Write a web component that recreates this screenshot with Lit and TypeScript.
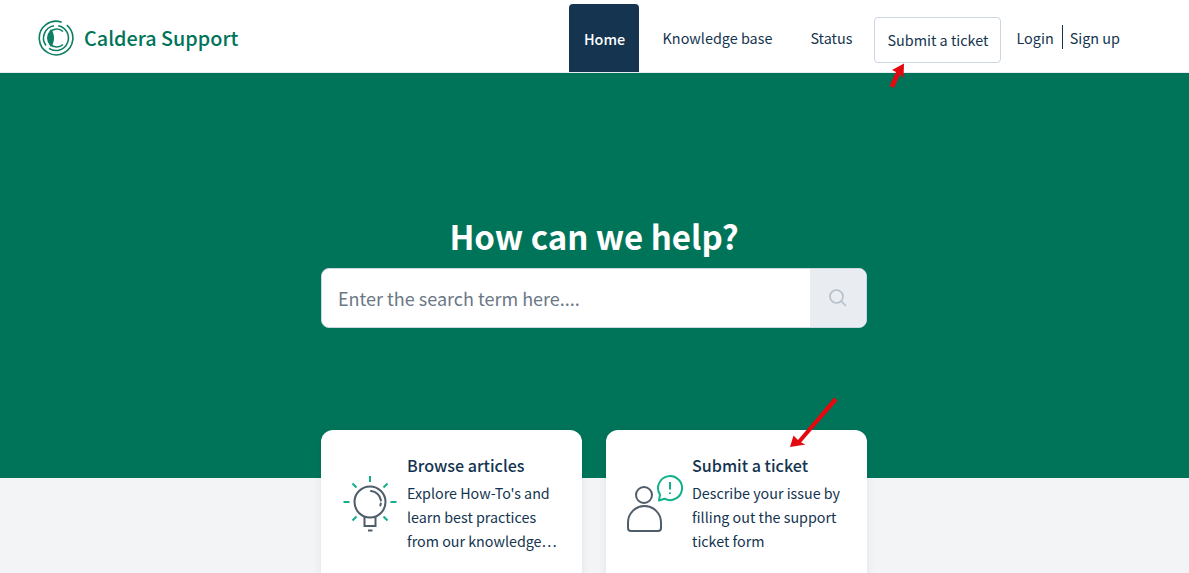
import { LitElement, css, html, svg } from 'lit'
import { customElement } from 'lit/decorators.js'

const logo = svg`<svg class="logo" width="36" height="36" viewBox="0 0 36 36" fill="none" stroke="#0f7f63" stroke-width="1.600">
  <path d="M23.700 2.200A16.800 16.800 0 1 0 28.800 5.100" />
  <path d="M20.200 5.700A12.500 12.500 0 1 1 11 28.400" />
  <path d="M16 5.700A12.500 12.500 0 0 0 8 25.500" />
  <path d="M25 11.500A9 9 0 1 0 25 24.500" />
  <path d="M13 9C9 14 9 22 13 27C17 22 17 14 13 9Z" fill="#0f7f63" stroke="none" />
</svg>`

const bulb = svg`<svg width="54" height="57" viewBox="0 0 54 57" fill="none" stroke-width="2">
  <g stroke="#12b08a">
    <path d="M27 1V7M9.500 8.500L13.500 12.500M44.500 8.500L40.500 12.500M0.500 27H6.500M47.500 27H53.500M9.500 45.500L13.500 41.500M44.500 45.500L40.500 41.500" />
  </g>
  <g stroke="#4f5d6b">
    <circle cx="27" cy="27" r="15.500" />
    <path d="M21.500 42V51H32.500V42" />
    <path d="M25 55.500H29.500" />
    <path d="M28 16A11 11 0 0 1 38 25.500M37.800 28.500L37.300 30.500" stroke-linecap="round" />
  </g>
</svg>`

const person = svg`<svg class="person" width="58" height="58" viewBox="0 0 58 58" fill="none" stroke-width="2">
  <g stroke="#4f5d6b">
    <circle cx="18" cy="20" r="8" />
    <path d="M2 53V47.500A16.500 16.500 0 0 1 35 47.500V53C35 55 34 56 32 56H5C3 56 2 55 2 53Z" />
  </g>
  <g stroke="#12b08a">
    <path d="M34 19.600A12 12 0 1 1 38.500 23.700L33 25.500Z" stroke-linejoin="round" />
    <path d="M44 7V14.500M44 17.500V19" />
  </g>
</svg>`

const arrow = (w: number, h: number, d: string, cls: string) =>
  svg`<svg class="arrow ${cls}" width="${w}" height="${h}" viewBox="0 0 ${w} ${h}"><path d="${d}" fill="#e3090f" /></svg>`

@customElement('app-root')
export class AppRoot extends LitElement {
  static styles = css`
    :host {
      display: block;
      height: 573px;
      overflow: hidden;
      position: relative;
      background: #f3f4f6;
      color: #14344f;
      font-family: 'Noto Sans CJK SC', 'Noto Sans', sans-serif;
      font-size: 14.4px;
    }

    header {
      box-sizing: border-box;
      height: 73px;
      background: #fff;
      display: flex;
      align-items: center;
      padding: 2px 69px 0 38px;
      border-bottom: 1px solid #e8ebef;
    }

    .brand {
      display: flex;
      align-items: center;
      gap: 10px;
      font-size: 19.8px;
      font-weight: 500;
      color: #007459;
      flex: 1;
    }

    .logo {
      margin-top: 2px;
    }

    nav {
      display: flex;
      align-items: center;
      height: 100%;
      line-height: 24px;
    }

    .home {
      box-sizing: border-box;
      align-self: flex-end;
      width: 70px;
      height: 68px;
      padding: 1px 0 0 2px;
      background: #14344f;
      color: #fff;
      border-radius: 4px 4px 0 0;
      display: flex;
      align-items: center;
      justify-content: center;
      font-weight: 500;
    }

    .link {
      margin: 2px 0 0 24px;
    }

    .status {
      margin: 2px 0 0 38px;
    }

    .submit {
      box-sizing: border-box;
      margin: 6px 0 0 22px;
      width: 127px;
      height: 46px;
      border: 1px solid #ccd6e0;
      border-radius: 4px;
      display: flex;
      align-items: center;
      justify-content: center;
    }

    .login {
      margin-left: 15px;
      padding-right: 8px;
      height: 24px;
      line-height: 26px;
      border-right: 1px solid #14344f;
    }

    .signup {
      margin: 2px 0 0 7px;
    }

    .hero {
      box-sizing: border-box;
      height: 405px;
      background: #007459;
      padding: 140px 1px 0 0;
      display: flex;
      flex-direction: column;
      align-items: center;
    }

    h1 {
      margin: 0 0 9px;
      color: #fff;
      font-size: 33px;
      line-height: 46px;
      font-weight: 700;
    }

    .search {
      box-sizing: border-box;
      width: 546px;
      height: 60px;
      background: #fff;
      border: 1px solid #ccd6e0;
      border-radius: 8px;
      overflow: hidden;
      display: flex;
    }

    .search .term {
      flex: 1;
      padding-left: 16px;
      display: flex;
      align-items: center;
      font-size: 18px;
      color: #6b7785;
    }

    .search .go {
      width: 56px;
      background: #e9ecf1;
      display: flex;
      align-items: center;
      justify-content: center;
    }

    .cards {
      display: flex;
      justify-content: center;
      gap: 24px;
      margin-top: -48px;
      padding-right: 1px;
    }

    .card {
      box-sizing: border-box;
      width: 261px;
      height: 180px;
      background: #fff;
      border-radius: 12px;
      box-shadow: 0 2px 8px rgba(20, 52, 79, 0.08);
      padding: 23px 24px 0 22px;
      display: flex;
      gap: 10px;
    }

    .card .icon {
      flex: none;
      width: 54px;
      padding-top: 22px;
    }

    .person {
      margin-left: -2px;
    }

    .card h2 {
      margin: 0 0 4px;
      font-size: 16.1px;
      line-height: 24px;
      font-weight: 500;
    }

    .card p {
      margin: 0;
      width: 152px;
      font-family: 'Noto Sans CJK KR', 'Noto Sans', sans-serif;
      font-size: 14.3px;
      line-height: 24px;
    }

    .arrow {
      position: absolute;
    }

    .arrow.top {
      left: 888px;
      top: 63px;
    }

    .arrow.low {
      left: 788px;
      top: 397px;
    }
  `

  render() {
    return html`
      <header>
        <div class="brand">${logo}<span>Caldera Support</span></div>
        <nav>
          <div class="home">Home</div>
          <div class="link">Knowledge base</div>
          <div class="status">Status</div>
          <div class="submit">Submit a ticket</div>
          <div class="login">Login</div>
          <div class="signup">Sign up</div>
        </nav>
      </header>
      <section class="hero">
        <h1>How can we help?</h1>
        <div class="search">
          <div class="term">Enter the search term here....</div>
          <div class="go">
            <svg width="18" height="18" viewBox="0 0 18 18" fill="none" stroke="#b4bfca" stroke-width="1.600">
              <circle cx="7.500" cy="7.500" r="6.500" />
              <path d="M12.500 12.500L17 17" />
            </svg>
          </div>
        </div>
      </section>
      <section class="cards">
        <div class="card">
          <div class="icon">${bulb}</div>
          <div>
            <h2>Browse articles</h2>
            <p>Explore How-To's and learn best practices from our knowledge…</p>
          </div>
        </div>
        <div class="card">
          <div class="icon">${person}</div>
          <div>
            <h2>Submit a ticket</h2>
            <p>Describe your issue by filling out the support ticket form</p>
          </div>
        </div>
      </section>
      ${arrow(18, 26, 'M16 0.500L15.500 15L12 11.500L6 25L1.500 23L8 9L4 7Z', 'top')}
      ${arrow(50, 53, 'M2 50L5.500 38.500L10 43L46 0.500L49.500 3.500L13 45.500L17.500 47.500Z', 'low')}
    `
  }
}
